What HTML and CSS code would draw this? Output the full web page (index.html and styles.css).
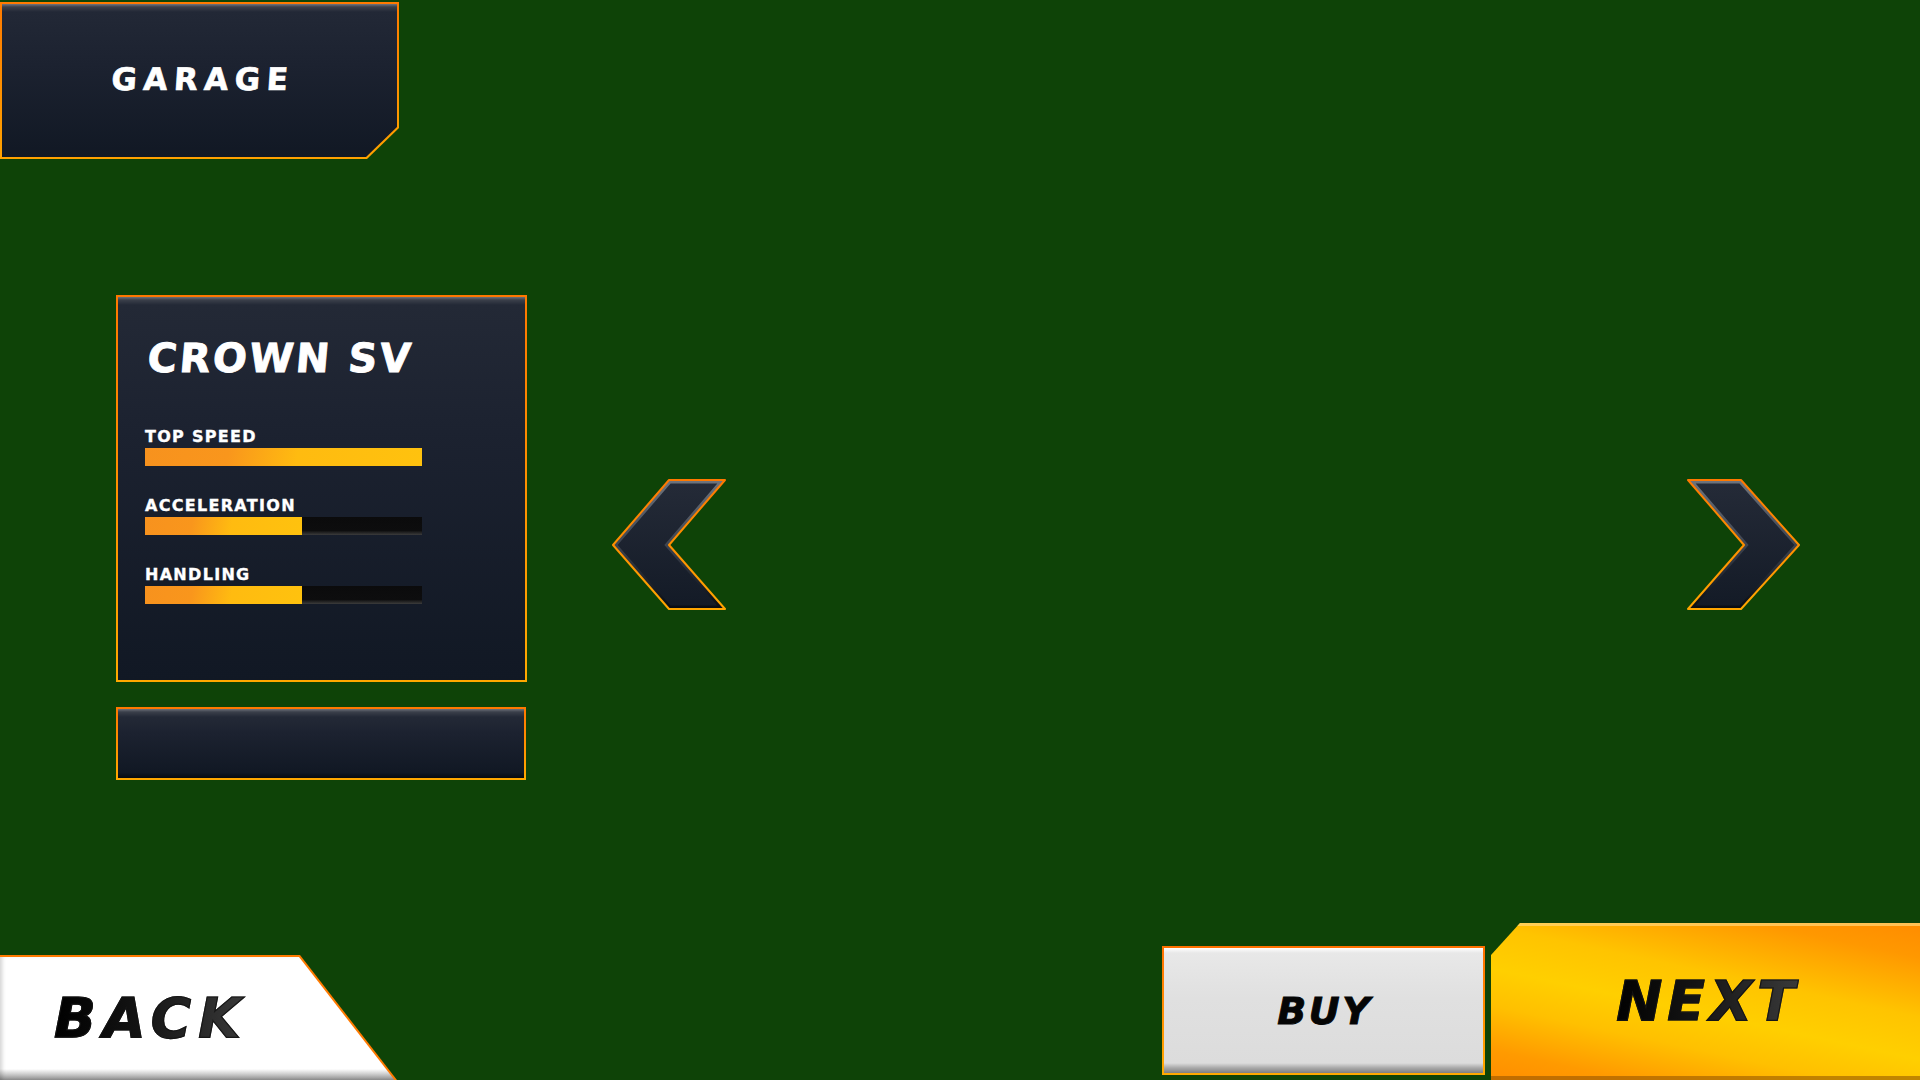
FILE: index.html
```html
<!DOCTYPE html>
<html lang="en">
<head>
<meta charset="utf-8">
<title>Garage</title>
<link rel="stylesheet" href="styles.css">
</head>
<body>
<div class="screen">
  <header class="top">
    <div class="garage"><div class="garage-inner"><span class="garage-title">GARAGE</span></div></div>
  </header>
  <main class="main">
    <div class="side">
      <section class="card">
        <h1 class="car-name">CROWN SV</h1>
        <div class="stat first">
          <div class="stat-label">TOP SPEED</div>
          <div class="bar"><div class="fill" style="width:100%"></div></div>
        </div>
        <div class="stat">
          <div class="stat-label">ACCELERATION</div>
          <div class="bar"><div class="fill" style="width:56.7%"></div></div>
        </div>
        <div class="stat">
          <div class="stat-label">HANDLING</div>
          <div class="bar"><div class="fill" style="width:56.7%"></div></div>
        </div>
      </section>
      <div class="price-panel"></div>
    </div>
    <button class="arrow arrow-left" aria-label="Previous">
      <svg width="116" height="133" viewBox="0 0 116 133">
        <defs>
          <linearGradient id="lfill" x1="0" y1="0" x2="0" y2="1">
            <stop offset="0" stop-color="#252b38"/>
            <stop offset="1" stop-color="#131a26"/>
          </linearGradient>
          <linearGradient id="lstroke" x1="0" y1="0" x2="0" y2="1">
            <stop offset="0" stop-color="#ff7800"/>
            <stop offset="1" stop-color="#ffa600"/>
          </linearGradient>
          <linearGradient id="lbevel" x1="0" y1="0" x2="0" y2="1">
            <stop offset="0" stop-color="#80868f"/>
            <stop offset="0.5" stop-color="#464c58"/>
            <stop offset="1" stop-color="#05080d"/>
          </linearGradient>
          <clipPath id="lclip"><polygon points="58,2 114,2 58,67 114,131 58,131 2,67"/></clipPath>
        </defs>
        <polygon points="58,2 114,2 58,67 114,131 58,131 2,67" fill="url(#lfill)"/>
        <polygon points="58,2 114,2 58,67 114,131 58,131 2,67" fill="none" stroke="url(#lbevel)" stroke-width="7" clip-path="url(#lclip)" opacity="0.8"/>
        <polygon points="58,2 114,2 58,67 114,131 58,131 2,67" fill="none" stroke="url(#lstroke)" stroke-width="2" stroke-linejoin="round"/>
      </svg>
    </button>
    <button class="arrow arrow-right" aria-label="Next car">
      <svg width="116" height="133" viewBox="0 0 116 133">
        <defs>
          <linearGradient id="rfill" x1="0" y1="0" x2="0" y2="1">
            <stop offset="0" stop-color="#252b38"/>
            <stop offset="1" stop-color="#131a26"/>
          </linearGradient>
          <linearGradient id="rstroke" x1="0" y1="0" x2="0" y2="1">
            <stop offset="0" stop-color="#ff7800"/>
            <stop offset="1" stop-color="#ffa600"/>
          </linearGradient>
          <linearGradient id="rbevel" x1="0" y1="0" x2="0" y2="1">
            <stop offset="0" stop-color="#80868f"/>
            <stop offset="0.5" stop-color="#464c58"/>
            <stop offset="1" stop-color="#05080d"/>
          </linearGradient>
          <clipPath id="rclip"><polygon points="2,2 55,2 113,67 55,131 2,131 58,67"/></clipPath>
        </defs>
        <polygon points="2,2 55,2 113,67 55,131 2,131 58,67" fill="url(#rfill)"/>
        <polygon points="2,2 55,2 113,67 55,131 2,131 58,67" fill="none" stroke="url(#rbevel)" stroke-width="7" clip-path="url(#rclip)" opacity="0.8"/>
        <polygon points="2,2 55,2 113,67 55,131 2,131 58,67" fill="none" stroke="url(#rstroke)" stroke-width="2" stroke-linejoin="round"/>
      </svg>
    </button>
  </main>
  <footer class="bottom">
    <button class="back"><span class="back-inner"><span class="dark-text back-text">BACK</span></span></button>
    <button class="buy"><span class="buy-text">BUY</span></button>
    <button class="next"><span class="dark-text next-text">NEXT</span></button>
  </footer>
</div>
</body>
</html>
```
FILE: styles.css
```css
html, body {
  margin: 0;
  padding: 0;
}
body {
  background: #0e4307;
  font-family: "DejaVu Sans", "Open Sans", sans-serif;
}
.screen {
  width: 1920px;
  height: 1080px;
  display: flex;
  flex-direction: column;
  overflow: hidden;
}
button {
  border: none;
  padding: 0;
  margin: 0;
  background: none;
  font-family: inherit;
  cursor: pointer;
}

/* Header */
.garage {
  width: 399px;
  height: 157px;
  margin-top: 2px;
  padding: 2px;
  box-sizing: border-box;
  display: flex;
  background: linear-gradient(180deg, #ff7a00, #ffa200);
  clip-path: polygon(0 0, 100% 0, 100% calc(100% - 31px), calc(100% - 32px) 100%, 0 100%);
}
.garage-inner {
  flex: 1;
  display: flex;
  align-items: center;
  justify-content: center;
  background: linear-gradient(180deg, #70747d 0, #3a3f4a 3px, #222836 8px, #1c2230 40%, #111824 100%);
  clip-path: polygon(0 0, 100% 0, 100% calc(100% - 30px), calc(100% - 31px) 100%, 0 100%);
}
.garage-title {
  display: inline-block;
  color: #fff;
  font-size: 31px;
  font-weight: 700;
  line-height: 31px;
  letter-spacing: 6.5px;
  padding-left: 6.5px;
  margin-top: -2px;
  -webkit-text-stroke: 0.7px #fff;
  transform: skewX(-4deg);
}

/* Main */
.main {
  display: flex;
  align-items: flex-start;
  padding-top: 136px;
}
.side {
  margin-left: 116px;
  display: flex;
  flex-direction: column;
  gap: 25px;
}
.card, .price-panel {
  box-sizing: border-box;
  border: 2px solid transparent;
  border-image: linear-gradient(180deg, #ff7800, #ffa800) 1;
  background: linear-gradient(180deg, #6d717a 0, #3a3f4a 3px, #232936 8px, #1c2230 35%, #111824 100%);
}
.card {
  width: 411px;
  height: 387px;
  padding: 41px 0 0 27px;
}
.price-panel {
  width: 410px;
  height: 73px;
  background: linear-gradient(180deg, #6d717a 0, #3a3f4a 3px, #232936 8px, #1c2230 35%, #111824 92%, #070a10 100%);
}
.car-name {
  display: inline-block;
  margin: 0 0 0 1px;
  color: #fff;
  font-size: 40px;
  font-weight: 700;
  line-height: 40px;
  letter-spacing: 2.5px;
  -webkit-text-stroke: 0.9px #fff;
  transform: skewX(-5deg);
  transform-origin: left bottom;
}
.stat {
  margin-top: 32px;
}
.stat.first {
  margin-top: 51px;
}
.stat-label {
  color: #fff;
  font-size: 16px;
  font-weight: 700;
  line-height: 16px;
  letter-spacing: 1.3px;
  -webkit-text-stroke: 0.35px #fff;
  margin-bottom: 3px;
}
.bar {
  width: 277px;
  height: 18px;
  background: linear-gradient(180deg, #0b0b0c 0, #0d0d0e 75%, #3c3c3c 100%);
}
.fill {
  height: 100%;
  background: linear-gradient(100deg, #f7921e 0%, #f9961c 30%, #ffbb10 55%, #ffc20e 100%);
}

/* Arrows */
.arrow {
  width: 116px;
  height: 133px;
  margin-top: 183px;
  display: block;
}
.arrow svg {
  display: block;
}
.arrow-left {
  margin-left: 84px;
}
.arrow-right {
  margin-left: 959px;
}

/* Footer */
.bottom {
  margin-top: auto;
  display: flex;
  align-items: flex-end;
}
.dark-text {
  background: linear-gradient(90deg, #000 0%, #141414 45%, #3a3a3a 100%);
  -webkit-background-clip: text;
  background-clip: text;
  color: transparent;
  font-style: italic;
  font-weight: 700;
}
.back {
  width: 397px;
  height: 125px;
  padding-top: 2px;
  box-sizing: border-box;
  display: flex;
  background: #ff7a00;
  clip-path: polygon(0 0, 300px 0, 100% 100%, 0 100%);
}
.back-inner {
  flex: 1;
  display: flex;
  align-items: center;
  padding-left: 54px;
  background: linear-gradient(180deg, #ffffff 0, #ffffff 91%, #d0d0d0 95%, #8c8c8c 100%);
  box-shadow: inset 4px 0 4px -2px rgba(0, 0, 0, 0.18);
  clip-path: polygon(0 0, 299px 0, 394.5px 100%, 0 100%);
}
.back-text {
  font-size: 55px;
  line-height: 55px;
  letter-spacing: 7px;
  -webkit-text-stroke: 1.2px rgba(20, 20, 20, 0.9);
}
.buy {
  margin-left: 765px;
  margin-bottom: 5px;
  width: 323px;
  height: 129px;
  box-sizing: border-box;
  border: 2px solid transparent;
  border-image: linear-gradient(180deg, #ff7000, #ffaa00) 1;
  background: linear-gradient(180deg, #ffffff 0, #e8e8e8 5px, #e0e0e0 40%, #dcdcdc 92%, #a8a8a8 96%, #808080 100%);
  display: flex;
  align-items: center;
  justify-content: center;
}
.buy-text {
  color: #050505;
  font-size: 38px;
  line-height: 38px;
  font-style: italic;
  font-weight: 700;
  letter-spacing: 2.5px;
  padding-left: 2.5px;
  -webkit-text-stroke: 0.9px #050505;
}
.next {
  margin-left: 6px;
  width: 429px;
  height: 157px;
  display: flex;
  align-items: center;
  justify-content: center;
  clip-path: polygon(29px 0, 100% 0, 100% 100%, 0 100%, 0 32px);
  background: linear-gradient(192deg, #ff8c00 0%, #ff9800 14%, #ffc400 38%, #ffcf00 55%, #ffc000 70%, #ff9a00 88%, #ff8e00 100%);
  box-shadow: inset 0 3px 0 rgba(255, 215, 120, 0.7), inset 0 -4px 0 rgba(140, 80, 0, 0.55);
}
.next-text {
  font-size: 55px;
  line-height: 55px;
  letter-spacing: 5px;
  padding-left: 5px;
  -webkit-text-stroke: 1.2px rgba(20, 20, 20, 0.9);
}
```
